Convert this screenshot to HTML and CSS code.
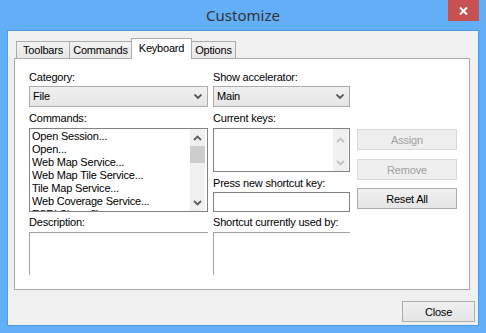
FILE: index.html
```html
<!DOCTYPE html>
<html lang="en">
<head>
<meta charset="UTF-8">
<title>Customize</title>
<link rel="stylesheet" href="styles.css">
</head>
<body>
<div class="window">
    <!-- title bar -->
    <div class="titlebar">
        <span class="title">Customize</span>
        <div class="close-x">
            <svg width="9" height="8" viewBox="0 0 9 8"><path d="M1 0.5 L8 7.5 M8 0.5 L1 7.5" stroke="#fff" stroke-width="2" fill="none"/></svg>
        </div>
    </div>

    <div class="client">
        <!-- tabs -->
        <div class="tabs">
            <div class="tab w-toolbars">Toolbars</div>
            <div class="tab w-commands">Commands</div>
            <div class="tab active w-keyboard">Keyboard</div>
            <div class="tab w-options">Options</div>
        </div>

        <div class="panel">
            <!-- left column -->
            <div class="col col-left">
                <div class="lbl">Category:</div>
                <div class="combo">
                    <span>File</span>
                    <svg class="chev" width="8" height="5" viewBox="0 0 8 5"><path d="M0.5 0.5 L4 4 L7.5 0.5" stroke="#555" stroke-width="1.8" fill="none"/></svg>
                </div>
                <div class="lbl gap5">Commands:</div>
                <div class="listbox cmd-list">
                    <div class="items">
                        <div>Open Session...</div>
                        <div>Open...</div>
                        <div>Web Map Service...</div>
                        <div>Web Map Tile Service...</div>
                        <div>Tile Map Service...</div>
                        <div>Web Coverage Service...</div>
                        <div>ESRI Shapefile...</div>
                    </div>
                    <div class="vscroll">
                        <svg class="arrow" width="9" height="6" viewBox="0 0 9 6"><path d="M1 5 L4.5 1.5 L8 5" stroke="#606060" stroke-width="1.8" fill="none"/></svg>
                        <div class="thumb"></div>
                        <div class="track"></div>
                        <svg class="arrow" width="9" height="6" viewBox="0 0 9 6"><path d="M1 1 L4.5 4.5 L8 1" stroke="#606060" stroke-width="1.8" fill="none"/></svg>
                    </div>
                </div>
                <div class="lbl gap4">Description:</div>
                <div class="memo"></div>
            </div>

            <!-- right column -->
            <div class="col col-right">
                <div class="lbl">Show accelerator:</div>
                <div class="combo">
                    <span>Main</span>
                    <svg class="chev" width="8" height="5" viewBox="0 0 8 5"><path d="M0.5 0.5 L4 4 L7.5 0.5" stroke="#555" stroke-width="1.8" fill="none"/></svg>
                </div>
                <div class="lbl gap5">Current keys:</div>
                <div class="listbox keys-list">
                    <div class="items"></div>
                    <div class="vscroll off">
                        <svg class="arrow" width="9" height="6" viewBox="0 0 9 6"><path d="M1 5 L4.5 1.5 L8 5" stroke="#c4c4c4" stroke-width="1.8" fill="none"/></svg>
                        <div class="track"></div>
                        <svg class="arrow" width="9" height="6" viewBox="0 0 9 6"><path d="M1 1 L4.5 4.5 L8 1" stroke="#c4c4c4" stroke-width="1.8" fill="none"/></svg>
                    </div>
                </div>
                <div class="lbl gap5">Press new shortcut key:</div>
                <div class="textbox"></div>
                <div class="lbl gap4">Shortcut currently used by:</div>
                <div class="memo"></div>
            </div>

            <!-- buttons -->
            <div class="col col-btns">
                <div class="btn disabled">Assign</div>
                <div class="btn disabled mt9">Remove</div>
                <div class="btn mt8">Reset All</div>
            </div>
        </div>

        <div class="footer">
            <div class="btn close-btn">Close</div>
        </div>
    </div>
</div>
</body>
</html>
```

FILE: styles.css
```css
body {margin:0;padding:0;font-family:"Liberation Sans",Arial,sans-serif;font-size:11px;letter-spacing:-0.2px;color:#000;}
.window {width:486px;height:333px;background:#62aff7;box-sizing:border-box;}

.titlebar {position:relative;height:31px;text-align:center;}
.title {font-family:"Noto Sans",sans-serif;font-size:15px;line-height:30px;color:#333;letter-spacing:0;}
.close-x {position:absolute;right:7px;top:0;width:31px;height:21px;background:#c75050;display:flex;align-items:center;justify-content:center;}

.client {margin:0 8px;height:294px;background:#f0f0f0;box-shadow:0 0 0 1px #4f9be2;padding:7px 3px 0 6px;box-sizing:border-box;}

.tabs {display:flex;align-items:flex-end;height:20px;margin-left:2px;position:relative;z-index:1;}
.tab {height:17px;box-sizing:border-box;border:1px solid #acacac;border-bottom:none;background:linear-gradient(#f2f2f2,#e8e8e8);line-height:16px;text-align:center;margin-left:-1px;}
.tab:first-child {margin-left:0;}
.tab.active {height:21px;background:#fff;margin-bottom:-1px;padding-top:1px;position:relative;z-index:2;}
.w-toolbars {width:54px;}
.w-commands {width:63px;}
.w-keyboard {width:61px;}
.w-options {width:45px;}

.panel {height:232px;margin-right:5px;box-sizing:border-box;background:#fff;border:1px solid #acacac;padding:12px 0 0 14px;display:flex;overflow:hidden;}
.col {display:flex;flex-direction:column;}
.col-left {width:179px;}
.col-right {width:137px;margin-left:5px;}
.col-btns {width:100px;margin-left:7px;padding-top:58px;}

.lbl {height:13px;line-height:13px;margin-bottom:2px;white-space:nowrap;}
.gap5 {margin-top:5px;margin-bottom:3px;}
.gap4 {margin-top:4px;margin-bottom:3px;}
.col-right .gap5 + .textbox {margin-top:-1px;}

.combo {height:21px;box-sizing:border-box;border:1px solid #acacac;background:linear-gradient(#f0f0f0,#e5e5e5);display:flex;align-items:center;justify-content:space-between;padding:0 5px 0 3px;}
.combo span {line-height:19px;}

.listbox {box-sizing:border-box;border:1px solid #828282;background:#fff;display:flex;overflow:hidden;}
.cmd-list {height:84px;}
.keys-list {height:44px;}
.items {flex:1;padding:1px 0 0 2px;overflow:hidden;}
.items div {height:13px;line-height:13px;white-space:nowrap;}

.vscroll {width:15px;margin-right:2px;background:#f0f0f0;display:flex;flex-direction:column;align-items:center;}
.vscroll .arrow {margin:6px 0 5px;flex:none;}
.vscroll .thumb {width:15px;height:17px;background:#cdcdcd;flex:none;}
.vscroll .track {flex:1;}
.keys-list .vscroll {margin-right:1px;}
.keys-list .vscroll .arrow {margin:8px 0 5px;}

.textbox {height:20px;box-sizing:border-box;border:1px solid #828282;background:#fff;}
.memo {height:43px;box-sizing:border-box;border-top:1px solid #a0a0a0;border-left:1px solid #a0a0a0;}

.btn {height:21px;box-sizing:border-box;border:1px solid #acacac;background:linear-gradient(#f0f0f0,#e5e5e5);display:flex;align-items:center;justify-content:center;}
.btn.disabled {border-color:#d9d9d9;background:#efefef;color:#a0a0a0;}
.mt9 {margin-top:9px;}
.mt8 {margin-top:8px;}

.footer {display:flex;justify-content:flex-end;padding-top:11px;}
.close-btn {width:73px;}
```
